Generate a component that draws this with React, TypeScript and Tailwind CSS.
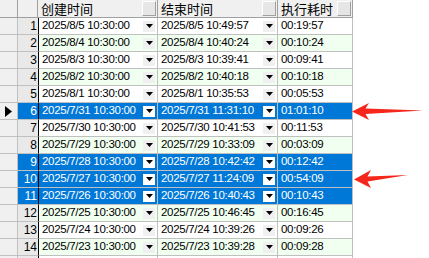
const rows = [
  ["2025/8/5 10:30:00", "2025/8/5 10:49:57", "00:19:57"],
  ["2025/8/4 10:30:00", "2025/8/4 10:40:24", "00:10:24"],
  ["2025/8/3 10:30:00", "2025/8/3 10:39:41", "00:09:41"],
  ["2025/8/2 10:30:00", "2025/8/2 10:40:18", "00:10:18"],
  ["2025/8/1 10:30:00", "2025/8/1 10:35:53", "00:05:53"],
  ["2025/7/31 10:30:00", "2025/7/31 11:31:10", "01:01:10"],
  ["2025/7/30 10:30:00", "2025/7/30 10:41:53", "00:11:53"],
  ["2025/7/29 10:30:00", "2025/7/29 10:33:09", "00:03:09"],
  ["2025/7/28 10:30:00", "2025/7/28 10:42:42", "00:12:42"],
  ["2025/7/27 10:30:00", "2025/7/27 11:24:09", "00:54:09"],
  ["2025/7/26 10:30:00", "2025/7/26 10:40:43", "00:10:43"],
  ["2025/7/25 10:30:00", "2025/7/25 10:46:45", "00:16:45"],
  ["2025/7/24 10:30:00", "2025/7/24 10:39:26", "00:09:26"],
  ["2025/7/23 10:30:00", "2025/7/23 10:39:28", "00:09:28"],
  // row 15 only peeks in at the bottom edge
  ["", "", ""],
];

const selected = [6, 9, 10, 11];

function DropButton({ sel }: { sel: boolean }) {
  return (
    <div
      className={
        "flex h-[11px] w-[12px] shrink-0 items-center justify-center " +
        (sel ? "bg-white" : "bg-[#f0f0f0]")
      }
    >
      <svg width="7" height="4" viewBox="0 0 7 4">
        <polygon points="0,0 7,0 3.5,4" fill="#000" />
      </svg>
    </div>
  );
}

function HeadCell({ title, w }: { title: string; w: string }) {
  return (
    <div
      className={
        w +
        " flex h-full items-center justify-between border-r border-[#a0a0a0] pl-[3px] pr-px"
      }
    >
      <span className="text-[13px] leading-none">{title}</span>
      <div className="h-[15px] w-[14px] border-t border-l border-white border-b border-r border-b-[#a0a0a0] border-r-[#a0a0a0] bg-[#e6e6e6]" />
    </div>
  );
}

export default function App() {
  return (
    <div className="relative h-[258px] w-[429px] overflow-hidden bg-white font-['Liberation_Sans','Noto_Sans_CJK_SC',sans-serif] text-black">
      <div className="w-[353px]">
        <div className="flex h-[18px] border-b border-[#a0a0a0] bg-[#f0f0f0] font-['Noto_Sans_CJK_SC',sans-serif]">
          <div className="w-[18px] border-r border-[#a0a0a0]" />
          <div className="w-[20px] border-r border-[#a0a0a0]" />
          <HeadCell title="创建时间" w="w-[120px]" />
          <HeadCell title="结束时间" w="w-[120px]" />
          <HeadCell title="执行耗时" w="w-[75px]" />
        </div>
        {rows.map((r, i) => {
          const n = i + 1;
          const sel = selected.includes(n);
          const bg = sel ? "bg-[#0078d7] text-white" : n % 2 === 0 ? "bg-[#f0fff0]" : "bg-white";
          return (
            <div key={n} className="flex h-[17px] text-[11.5px] tracking-[-0.3px]">
              <div className="flex w-[18px] items-center justify-center border-r border-b border-[#c0c0c0] bg-[#f0f0f0]">
                {n === 6 && (
                  <svg width="7" height="11" viewBox="0 0 7 11">
                    <polygon points="0,0 7,5.5 0,11" fill="#000" />
                  </svg>
                )}
              </div>
              <div
                className={
                  "flex w-[20px] items-center justify-end border-b border-[#c0c0c0] pr-px text-[12px] tracking-normal " +
                  (sel ? "bg-[#0078d7] text-white" : "bg-[#e9e9e9]")
                }
              >
                {n < 15 ? n : ""}
              </div>
              <div className={"flex w-[120px] items-center justify-between border-l border-black border-r border-r-[#c0c0c0] border-b border-b-[#c0c0c0] pl-[3px] pr-[2px] " + bg}>
                <span>{r[0]}</span>
                {n < 15 && <DropButton sel={sel} />}
              </div>
              <div className={"flex w-[120px] items-center justify-between border-r border-b border-[#c0c0c0] pl-[3px] pr-[2px] " + bg}>
                <span>{r[1]}</span>
                {n < 15 && <DropButton sel={sel} />}
              </div>
              <div className={"flex w-[75px] items-center border-r border-b border-[#c0c0c0] pl-[3px] " + bg}>
                <span>{r[2]}</span>
              </div>
            </div>
          );
        })}
      </div>
      <svg
        className="pointer-events-none absolute top-0 left-0"
        width="429"
        height="258"
        viewBox="0 0 429 258"
      >
        <path d="M352,111.5 L369,103 L365.5,108.5 L423,110.5 L365.5,114 L369,120 Z" fill="#f5261b" />
        <path d="M354,179.5 L371,170 L367.5,176.5 L408,175 L367.5,181.5 L371,188 Z" fill="#f5261b" />
      </svg>
    </div>
  );
}
